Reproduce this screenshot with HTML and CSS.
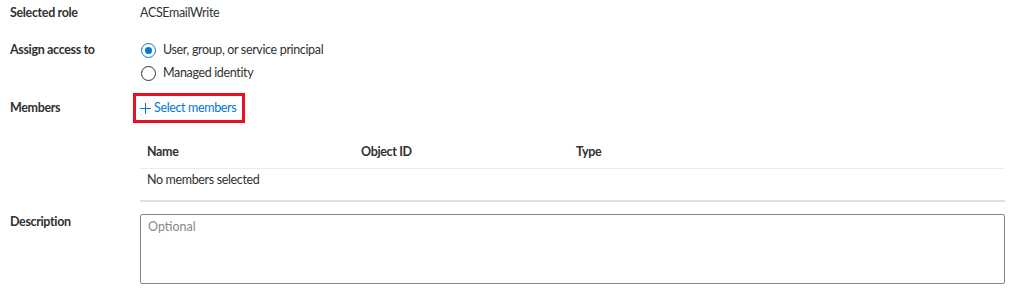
FILE: index.html
```html
<!DOCTYPE html>
<html lang="en">

<head>
  <meta charset="UTF-8" />
  <title>Add role assignment</title>
  <link rel="stylesheet" href="styles.css">
</head>

<body>
  <div class="form">
    <div class="row row-role">
      <div class="label">Selected role</div>
      <div class="value">ACSEmailWrite</div>
    </div>

    <div class="row row-access">
      <div class="label">Assign access to</div>
      <div class="value radios">
        <label class="radio checked"><span class="dot"></span>User, group, or service principal</label>
        <label class="radio"><span class="dot"></span>Managed identity</label>
      </div>
    </div>

    <div class="row row-members">
      <div class="label">Members</div>
      <div class="value">
        <a class="select-link" href="#">
          <svg class="plus" width="11" height="11" viewBox="0 0 11 11"><path d="M5.5 0v11M0 5.5h11" stroke="currentColor" stroke-width="1" fill="none"/></svg>
          Select members
        </a>
      </div>
    </div>

    <div class="members-table">
      <div class="tr th">
        <span>Name</span>
        <span>Object ID</span>
        <span>Type</span>
      </div>
      <div class="tr empty">No members selected</div>
    </div>

    <div class="row row-desc">
      <div class="label">Description</div>
      <div class="value">
        <textarea class="desc" placeholder="Optional"></textarea>
      </div>
    </div>
  </div>
</body>

</html>
```

FILE: styles.css
```css
:root {
  --text: #323130;
  --muted: #605e5c;
  --link: #0078d4;
  --line: #edebe9;
  --red: #e81123;
}

body {
  margin: 0;
  padding: 0 19px 0 10px;
  font-family: 'Lato', 'Noto Sans', sans-serif;
  font-size: 12.5px;
  letter-spacing: -0.35px;
  color: var(--text);
  background: #fff;
}

.row {
  display: grid;
  grid-template-columns: 130px 1fr;
  align-items: start;
}

.label {
  font-weight: 700;
  line-height: 16px;
}

.value {
  line-height: 16px;
}

.row-role {
  padding-top: 5px;
}

.row-access {
  margin-top: 21px;
}

.radios {
  display: flex;
  flex-direction: column;
  gap: 7px;
}

.radio {
  display: flex;
  align-items: center;
  gap: 7px;
  margin-left: 1px;
}

.dot {
  width: 13px;
  height: 13px;
  border: 1px solid #323130;
  border-radius: 50%;
  position: relative;
  flex: none;
}

.radio.checked .dot {
  border-color: var(--link);
}

.radio.checked .dot::after {
  content: '';
  position: absolute;
  left: 3px;
  top: 3px;
  width: 7px;
  height: 7px;
  border-radius: 50%;
  background: var(--link);
}

.row-members {
  margin-top: 12px;
}

.row-members .label {
  padding-top: 7px;
}

.select-link {
  display: inline-flex;
  align-items: center;
  gap: 3px;
  margin-left: -7px;
  padding: 4px 6px 4px 4px;
  border: 3px solid var(--red);
  color: var(--link);
  text-decoration: none;
}

.plus {
  display: block;
  flex: none;
}

.members-table {
  margin: 21px 0 0 130px;
}

.tr {
  display: grid;
  grid-template-columns: 214px 215px 1fr;
  padding: 0 7px;
  line-height: 16px;
}

.th {
  font-weight: 700;
  padding-top: 0;
  padding-bottom: 8px;
  border-bottom: 1px solid var(--line);
}

.empty {
  display: block;
  padding-top: 3px;
  padding-bottom: 12px;
  border-bottom: 2px solid #e1dfdd;
}

.row-desc {
  margin-top: 12px;
}

.desc {
  display: block;
  box-sizing: border-box;
  width: 100%;
  height: 70px;
  margin: 0;
  padding: 4px 7px;
  font: inherit;
  color: var(--text);
  border: 1px solid #8a8886;
  border-radius: 2px;
  resize: none;
}

.desc::placeholder {
  color: #8a8886;
}
```
